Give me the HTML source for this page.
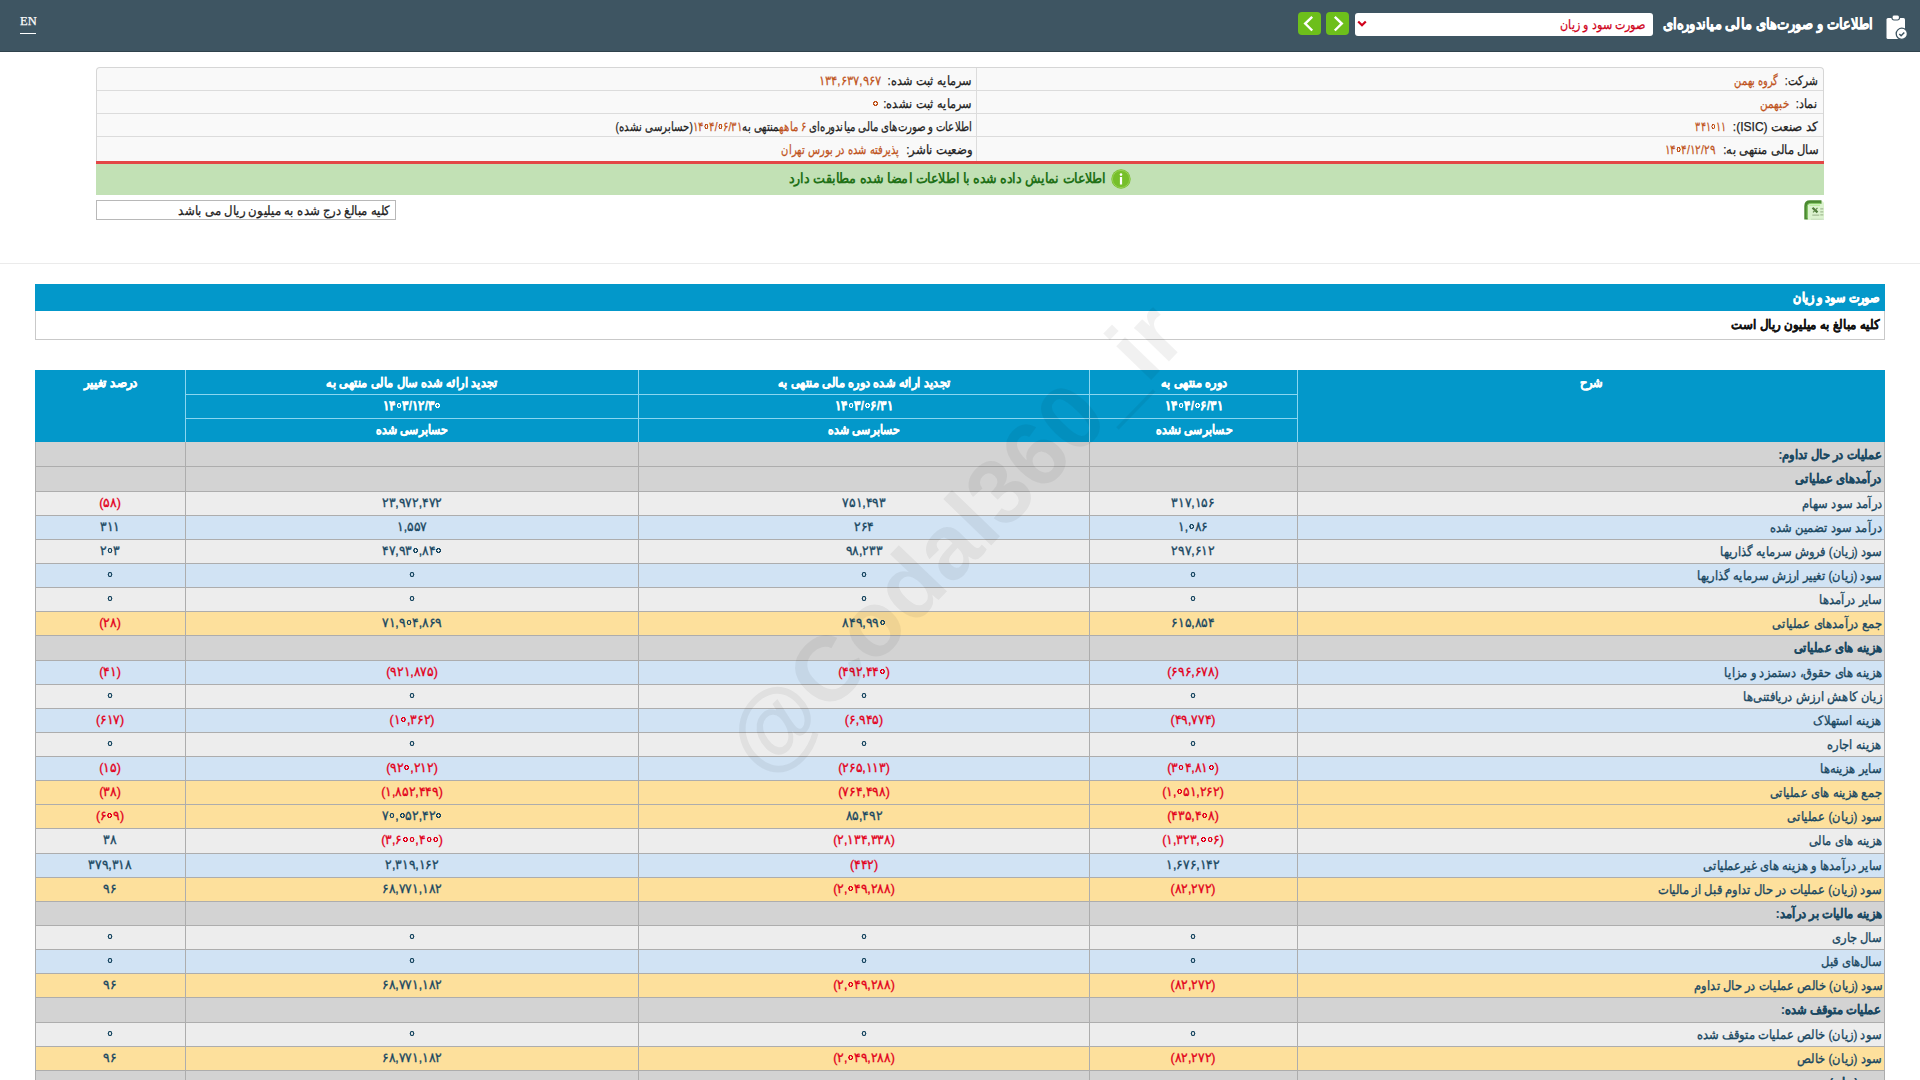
<!DOCTYPE html>
<html lang="fa" dir="rtl">
<head>
<meta charset="utf-8">
<title>صورت سود و زیان</title>
<style>
html,body{margin:0;padding:0;background:#fff;width:1920px;height:1080px;overflow:hidden;font-family:"Liberation Sans",sans-serif;position:relative;}
.t{position:absolute;white-space:nowrap;display:inline-block;-webkit-text-stroke:0.25px currentColor;}
.z{color:transparent;-webkit-text-stroke:0 !important;font-weight:normal;background:radial-gradient(circle at 50% 50%,transparent 0,transparent 1.05px,var(--c) 1.35px,var(--c) 2.35px,transparent 2.75px);}
</style>
</head>
<body>
<div style="position:absolute;left:0;top:0;width:1920px;height:52px;background:#3e5562;"></div>
<div style="position:absolute;left:0;top:51px;width:1920px;height:1px;background:#2f424c;"></div>
<span class="t" style="left:20px;top:11.5px;font-family:'Liberation Serif',serif;font-size:12.5px;color:#fff;line-height:18px;-webkit-text-stroke:0.25px #fff;">EN</span>
<div style="position:absolute;left:20px;top:33px;width:16px;height:1px;background:#fff;"></div>
<span class="t" id="ttl" style="top:15px;font-size:15px;color:#fff;line-height:18px;font-weight:bold;-webkit-text-stroke:0;right:47px;transform-origin:100% 50%;transform:scaleX(0.8654);-webkit-text-stroke:0.5px #fff;">اطلاعات و صورت‌های مالی میاندوره‌ای</span>
<svg style="position:absolute;left:1885px;top:14px" width="24" height="27" viewBox="0 0 24 27"><rect x="1.5" y="4" width="18.5" height="21" rx="1.5" fill="#fff"/><rect x="7" y="1" width="7.5" height="5" rx="2" fill="#fff" stroke="#3e5562" stroke-width="1.2"/><circle cx="16.8" cy="19.8" r="5.6" fill="#fff" stroke="#3e5562" stroke-width="1.3"/><path d="M14.3 20l1.8 1.8 3.2-3.3" fill="none" stroke="#3e5562" stroke-width="1.5"/></svg>
<div style="position:absolute;left:1355px;top:13px;width:298px;height:23px;background:#fff;border-radius:3px;"></div>
<span class="t" id="selt" style="top:17px;font-size:13px;color:#d0021b;line-height:16px;right:274px;transform-origin:100% 50%;transform:scaleX(0.8528);">صورت سود و زیان</span>
<svg style="position:absolute;left:1357px;top:20px" width="10" height="8" viewBox="0 0 10 8"><path d="M1.2 1.5l3.8 3.8 3.8-3.8" fill="none" stroke="#d0021b" stroke-width="2.2"/></svg>
<div style="position:absolute;left:1298px;top:12px;width:23px;height:23px;background:#6dbf1b;border-radius:4px;"><svg width="23" height="23" viewBox="0 0 23 23"><path d="M14.2 4.8L7.2 11.6l7 6.9" fill="none" stroke="#fff" stroke-width="2.4"/></svg></div>
<div style="position:absolute;left:1326px;top:12px;width:23px;height:23px;background:#6dbf1b;border-radius:4px;"><svg width="23" height="23" viewBox="0 0 23 23"><path d="M8.8 4.8l7 6.8-7 6.9" fill="none" stroke="#fff" stroke-width="2.4"/></svg></div>
<div style="position:absolute;left:96px;top:67px;width:1726px;height:94px;background:#f9f9f9;border:1px solid #d6d6d6;border-bottom:none;border-radius:4px 4px 0 0;"></div>
<div style="position:absolute;left:97px;top:90px;width:1726px;height:1px;background:#dcdcdc;"></div>
<div style="position:absolute;left:97px;top:113px;width:1726px;height:1px;background:#dcdcdc;"></div>
<div style="position:absolute;left:97px;top:136px;width:1726px;height:1px;background:#dcdcdc;"></div>
<div style="position:absolute;left:976px;top:68px;width:1px;height:93px;background:#dcdcdc;"></div>
<div style="position:absolute;left:96px;top:161px;width:1728px;height:3px;background:#e34646;"></div>
<div style="position:absolute;left:96px;top:164px;width:1728px;height:31px;background:#c2e1b5;"></div>
<span class="t" id="ir0" style="top:73px;font-size:13px;color:#222;line-height:16px;right:102px;transform-origin:100% 50%;transform:scaleX(0.8123);">شرکت:</span>
<span class="t" id="irv0" style="top:73px;font-size:13px;color:#c0541d;line-height:16px;right:142.5px;transform-origin:100% 50%;transform:scaleX(0.7566);">گروه بهمن</span>
<span class="t" id="ir1" style="top:96px;font-size:13px;color:#222;line-height:16px;right:102px;transform-origin:100% 50%;transform:scaleX(0.8585);">نماد:</span>
<span class="t" id="irv1" style="top:96px;font-size:13px;color:#c0541d;line-height:16px;right:131.29999999999995px;transform-origin:100% 50%;transform:scaleX(0.8056);">خبهمن</span>
<span class="t" id="ir2" style="top:119px;font-size:13px;color:#222;line-height:16px;right:102px;transform-origin:100% 50%;transform:scaleX(0.9258);">کد صنعت (ISIC):</span>
<span class="t" id="irv2" style="top:119px;font-size:13px;color:#c0541d;line-height:16px;right:194px;transform-origin:100% 50%;transform:scaleX(0.7262);">۳۴۱<b class="z" style="--c:#c0541d">۰</b>۱۱</span>
<span class="t" id="ir3" style="top:142px;font-size:13px;color:#222;line-height:16px;right:102px;transform-origin:100% 50%;transform:scaleX(0.8869);">سال مالی منتهی به:</span>
<span class="t" id="irv3" style="top:142px;font-size:13px;color:#c0541d;line-height:16px;right:204.4000000000001px;transform-origin:100% 50%;transform:scaleX(0.8018);">۱۴<b class="z" style="--c:#c0541d">۰</b>۴/۱۲/۲۹</span>
<span class="t" id="il0" style="top:73px;font-size:13px;color:#222;line-height:16px;right:948px;transform-origin:100% 50%;transform:scaleX(0.8705);">سرمایه ثبت شده:</span>
<span class="t" id="ilv0" style="top:73px;font-size:13px;color:#c0541d;line-height:16px;right:1038.5px;transform-origin:100% 50%;transform:scaleX(0.8913);">۱۳۴,۶۳۷,۹۶۷</span>
<span class="t" id="il1" style="top:96px;font-size:13px;color:#222;line-height:16px;right:948px;transform-origin:100% 50%;transform:scaleX(0.8700);">سرمایه ثبت نشده:</span>
<span class="t" id="ilv1" style="top:96px;font-size:13px;color:#c0541d;line-height:16px;right:1041.5px;transform-origin:100% 50%;transform:scaleX(1.0000);"><b class="z" style="--c:#c0541d">۰</b></span>
<span class="t" id="il3" style="top:142px;font-size:13px;color:#222;line-height:16px;right:948px;transform-origin:100% 50%;transform:scaleX(0.9012);">وضعیت ناشر:</span>
<span class="t" id="ilv3" style="top:142px;font-size:13px;color:#c0541d;line-height:16px;right:1020.2px;transform-origin:100% 50%;transform:scaleX(0.7640);">پذیرفته شده در بورس تهران</span>
<span class="t" id="il2" style="top:119px;font-size:13px;color:#222;line-height:16px;right:948px;transform-origin:100% 50%;transform:scaleX(0.7799);">اطلاعات و صورت‌های مالی میاندوره‌ای <span style="color:#c0541d">۶ ماهه</span>منتهی به<span style="color:#c0541d">۱۴<b class="z" style="--c:#c0541d">۰</b>۴/<b class="z" style="--c:#c0541d">۰</b>۶/۳۱</span>(حسابرسی نشده)</span>
<span class="t" id="grn" style="top:170px;font-size:14px;color:#217016;line-height:17px;font-weight:bold;-webkit-text-stroke:0;right:814px;transform-origin:100% 50%;transform:scaleX(0.9042);">اطلاعات نمایش داده شده با اطلاعات امضا شده مطابقت دارد</span>
<svg style="position:absolute;left:1111px;top:169px" width="20" height="20" viewBox="0 0 20 20"><circle cx="10" cy="10" r="9.7" fill="#76bf2a"/><circle cx="10" cy="10" r="8.6" fill="none" stroke="#9fd45e" stroke-width="0.8"/><rect x="8.9" y="8" width="2.2" height="7.5" fill="#fff"/><circle cx="10" cy="5.6" r="1.3" fill="#fff"/></svg>
<div style="position:absolute;left:96px;top:200px;width:298px;height:18px;border:1px solid #b8b8b8;background:#fff;"></div>
<span class="t" id="note" style="top:203px;font-size:13px;color:#222;line-height:16px;right:1530px;transform-origin:100% 50%;transform:scaleX(0.9008);">کلیه مبالغ درج شده به میلیون ریال می باشد</span>
<svg style="position:absolute;left:1804px;top:200px" width="21" height="21" viewBox="0 0 21 21"><rect x="1" y="1" width="19" height="19" rx="3" fill="#dcf3cf"/><path d="M2 19.5V6Q2 2 6 2H17.5" fill="none" stroke="#4a8a30" stroke-width="3.4"/><path d="M3.2 18V6.5Q3.2 3.4 6.4 3.4H16.5" fill="none" stroke="#8fd36e" stroke-width="0.9"/><path d="M5.5 5.2H16" stroke="#b5eb95" stroke-width="1.2"/><path d="M8.5 7.8l5 4.6" stroke="#4f7a3a" stroke-width="2.2"/><path d="M13.5 7.8l-4.5 4.6" stroke="#5f8a48" stroke-width="1.2"/><path d="M16.3 8.8h3M16.3 11.8h3M16.3 14.8h3M8.3 15.2h7" stroke="#a3bc95" stroke-width="1.3"/><path d="M7 19.2h13" stroke="#c6dcbc" stroke-width="1"/></svg>
<div style="position:absolute;left:0;top:263px;width:1920px;height:1px;background:#ebebeb;"></div>
<div style="position:absolute;left:35px;top:284px;width:1850px;height:27px;background:#0398ca;"></div>
<span class="t" id="bart" style="top:290px;font-size:13px;color:#fff;line-height:16px;font-weight:bold;-webkit-text-stroke:0;right:40px;transform-origin:100% 50%;transform:scaleX(0.8597);-webkit-text-stroke:0.75px #fff;">صورت سود و زیان</span>
<div style="position:absolute;left:35px;top:311px;width:1848px;height:28px;border:1px solid #c9c9c9;border-top:none;background:#fff;"></div>
<span class="t" id="subt" style="top:317px;font-size:13px;color:#111;line-height:16px;font-weight:bold;-webkit-text-stroke:0;right:41px;transform-origin:100% 50%;transform:scaleX(0.9076);-webkit-text-stroke:0.2px #111;">کلیه مبالغ به میلیون ریال است</span>
<div style="position:absolute;left:35px;top:370px;width:1850px;height:72px;background:#0398ca;"></div>
<div style="position:absolute;left:185px;top:370px;width:1px;height:72px;background:#8ad6f0;"></div>
<div style="position:absolute;left:638px;top:370px;width:1px;height:72px;background:#8ad6f0;"></div>
<div style="position:absolute;left:1089px;top:370px;width:1px;height:72px;background:#8ad6f0;"></div>
<div style="position:absolute;left:1297px;top:370px;width:1px;height:72px;background:#8ad6f0;"></div>
<div style="position:absolute;left:186px;top:394px;width:1111px;height:1px;background:#8ad6f0;"></div>
<div style="position:absolute;left:186px;top:418px;width:1111px;height:1px;background:#8ad6f0;"></div>
<span class="t" style="left:1591px;top:375px;font-size:13px;font-weight:bold;color:#fff;line-height:16px;-webkit-text-stroke:0.3px #fff;transform-origin:50% 50%;transform:translateX(-50%) scaleX(0.88);">شرح</span>
<span class="t" style="left:110.5px;top:375px;font-size:13px;font-weight:bold;color:#fff;line-height:16px;-webkit-text-stroke:0.3px #fff;transform-origin:50% 50%;transform:translateX(-50%) scaleX(0.92);">درصد تغییر</span>
<span class="t" style="left:1193.5px;top:375px;font-size:13px;font-weight:bold;color:#fff;line-height:16px;-webkit-text-stroke:0.3px #fff;transform-origin:50% 50%;transform:translateX(-50%) scaleX(0.88);">دوره منتهی به</span>
<span class="t" style="left:863.5px;top:375px;font-size:13px;font-weight:bold;color:#fff;line-height:16px;-webkit-text-stroke:0.3px #fff;transform-origin:50% 50%;transform:translateX(-50%) scaleX(0.88);">تجدید ارائه شده دوره مالی منتهی به</span>
<span class="t" style="left:411.5px;top:375px;font-size:13px;font-weight:bold;color:#fff;line-height:16px;-webkit-text-stroke:0.3px #fff;transform-origin:50% 50%;transform:translateX(-50%) scaleX(0.88);">تجدید ارائه شده سال مالی منتهی به</span>
<span class="t" style="left:1193.5px;top:398px;font-size:13px;font-weight:bold;color:#fff;line-height:16px;-webkit-text-stroke:0.3px #fff;transform-origin:50% 50%;transform:translateX(-50%) scaleX(0.915);">۱۴<b class="z" style="--c:#fff">۰</b>۴/<b class="z" style="--c:#fff">۰</b>۶/۳۱</span>
<span class="t" style="left:863.5px;top:398px;font-size:13px;font-weight:bold;color:#fff;line-height:16px;-webkit-text-stroke:0.3px #fff;transform-origin:50% 50%;transform:translateX(-50%) scaleX(0.915);">۱۴<b class="z" style="--c:#fff">۰</b>۳/<b class="z" style="--c:#fff">۰</b>۶/۳۱</span>
<span class="t" style="left:411.5px;top:398px;font-size:13px;font-weight:bold;color:#fff;line-height:16px;-webkit-text-stroke:0.3px #fff;transform-origin:50% 50%;transform:translateX(-50%) scaleX(0.915);">۱۴<b class="z" style="--c:#fff">۰</b>۳/۱۲/۳<b class="z" style="--c:#fff">۰</b></span>
<span class="t" style="left:1193.5px;top:422px;font-size:13px;font-weight:bold;color:#fff;line-height:16px;-webkit-text-stroke:0.3px #fff;transform-origin:50% 50%;transform:translateX(-50%) scaleX(0.845);">حسابرسی نشده</span>
<span class="t" style="left:863.5px;top:422px;font-size:13px;font-weight:bold;color:#fff;line-height:16px;-webkit-text-stroke:0.3px #fff;transform-origin:50% 50%;transform:translateX(-50%) scaleX(0.845);">حسابرسی شده</span>
<span class="t" style="left:411.5px;top:422px;font-size:13px;font-weight:bold;color:#fff;line-height:16px;-webkit-text-stroke:0.3px #fff;transform-origin:50% 50%;transform:translateX(-50%) scaleX(0.845);">حسابرسی شده</span>
<div style="position:absolute;left:35px;top:442px;width:1850px;height:24px;background:#d3d3d3;"></div>
<span class="t" style="right:38px;top:447px;font-size:13px;font-weight:bold;color:#1a4862;line-height:16px;transform-origin:100% 50%;transform:scaleX(0.885);-webkit-text-stroke:0.2px #1a4862;">عملیات در حال تداوم:</span>
<div style="position:absolute;left:35px;top:466px;width:1850px;height:25px;background:#d3d3d3;"></div>
<div style="position:absolute;left:35px;top:466px;width:1850px;height:1px;background:#adadad;"></div>
<span class="t" style="right:38px;top:471px;font-size:13px;font-weight:bold;color:#1a4862;line-height:16px;transform-origin:100% 50%;transform:scaleX(0.885);-webkit-text-stroke:0.2px #1a4862;">درآمدهای عملیاتی</span>
<div style="position:absolute;left:35px;top:491px;width:1850px;height:24px;background:#ededed;"></div>
<div style="position:absolute;left:35px;top:491px;width:1850px;height:1px;background:#adadad;"></div>
<span class="t" style="right:38px;top:496px;font-size:13px;color:#1a4862;line-height:16px;transform-origin:100% 50%;transform:scaleX(0.885);-webkit-text-stroke:0.35px #1a4862;">درآمد سود سهام</span>
<span class="t" style="left:1193.0px;top:495px;font-size:13px;color:#1a4862;line-height:16px;transform-origin:50% 50%;transform:translateX(-50%) scaleX(0.95);-webkit-text-stroke:0.35px #1a4862;">۳۱۷,۱۵۶</span>
<span class="t" style="left:863.5px;top:495px;font-size:13px;color:#1a4862;line-height:16px;transform-origin:50% 50%;transform:translateX(-50%) scaleX(0.95);-webkit-text-stroke:0.35px #1a4862;">۷۵۱,۴۹۳</span>
<span class="t" style="left:411.5px;top:495px;font-size:13px;color:#1a4862;line-height:16px;transform-origin:50% 50%;transform:translateX(-50%) scaleX(0.95);-webkit-text-stroke:0.35px #1a4862;">۲۳,۹۷۲,۴۷۲</span>
<span class="t" style="left:110.0px;top:495px;font-size:13px;color:#e3001b;line-height:16px;transform-origin:50% 50%;transform:translateX(-50%) scaleX(0.95);-webkit-text-stroke:0.35px #e3001b;">(۵۸)</span>
<div style="position:absolute;left:35px;top:515px;width:1850px;height:24px;background:#d1e3f4;"></div>
<div style="position:absolute;left:35px;top:515px;width:1850px;height:1px;background:#adadad;"></div>
<span class="t" style="right:38px;top:520px;font-size:13px;color:#1a4862;line-height:16px;transform-origin:100% 50%;transform:scaleX(0.885);-webkit-text-stroke:0.35px #1a4862;">درآمد سود تضمین شده</span>
<span class="t" style="left:1193.0px;top:519px;font-size:13px;color:#1a4862;line-height:16px;transform-origin:50% 50%;transform:translateX(-50%) scaleX(0.95);-webkit-text-stroke:0.35px #1a4862;">۱,<b class="z" style="--c:#1a4862">۰</b>۸۶</span>
<span class="t" style="left:863.5px;top:519px;font-size:13px;color:#1a4862;line-height:16px;transform-origin:50% 50%;transform:translateX(-50%) scaleX(0.95);-webkit-text-stroke:0.35px #1a4862;">۲۶۴</span>
<span class="t" style="left:411.5px;top:519px;font-size:13px;color:#1a4862;line-height:16px;transform-origin:50% 50%;transform:translateX(-50%) scaleX(0.95);-webkit-text-stroke:0.35px #1a4862;">۱,۵۵۷</span>
<span class="t" style="left:110.0px;top:519px;font-size:13px;color:#1a4862;line-height:16px;transform-origin:50% 50%;transform:translateX(-50%) scaleX(0.95);-webkit-text-stroke:0.35px #1a4862;">۳۱۱</span>
<div style="position:absolute;left:35px;top:539px;width:1850px;height:24px;background:#ededed;"></div>
<div style="position:absolute;left:35px;top:539px;width:1850px;height:1px;background:#adadad;"></div>
<span class="t" style="right:38px;top:544px;font-size:13px;color:#1a4862;line-height:16px;transform-origin:100% 50%;transform:scaleX(0.885);-webkit-text-stroke:0.35px #1a4862;">سود (زیان) فروش سرمایه گذاریها</span>
<span class="t" style="left:1193.0px;top:543px;font-size:13px;color:#1a4862;line-height:16px;transform-origin:50% 50%;transform:translateX(-50%) scaleX(0.95);-webkit-text-stroke:0.35px #1a4862;">۲۹۷,۶۱۲</span>
<span class="t" style="left:863.5px;top:543px;font-size:13px;color:#1a4862;line-height:16px;transform-origin:50% 50%;transform:translateX(-50%) scaleX(0.95);-webkit-text-stroke:0.35px #1a4862;">۹۸,۲۳۳</span>
<span class="t" style="left:411.5px;top:543px;font-size:13px;color:#1a4862;line-height:16px;transform-origin:50% 50%;transform:translateX(-50%) scaleX(0.95);-webkit-text-stroke:0.35px #1a4862;">۴۷,۹۳<b class="z" style="--c:#1a4862">۰</b>,۸۴<b class="z" style="--c:#1a4862">۰</b></span>
<span class="t" style="left:110.0px;top:543px;font-size:13px;color:#1a4862;line-height:16px;transform-origin:50% 50%;transform:translateX(-50%) scaleX(0.95);-webkit-text-stroke:0.35px #1a4862;">۲<b class="z" style="--c:#1a4862">۰</b>۳</span>
<div style="position:absolute;left:35px;top:563px;width:1850px;height:24px;background:#d1e3f4;"></div>
<div style="position:absolute;left:35px;top:563px;width:1850px;height:1px;background:#adadad;"></div>
<span class="t" style="right:38px;top:568px;font-size:13px;color:#1a4862;line-height:16px;transform-origin:100% 50%;transform:scaleX(0.885);-webkit-text-stroke:0.35px #1a4862;">سود (زیان) تغییر ارزش سرمایه گذاریها</span>
<span class="t" style="left:1193.0px;top:567px;font-size:13px;color:#1a4862;line-height:16px;transform-origin:50% 50%;transform:translateX(-50%) scaleX(0.95);-webkit-text-stroke:0.35px #1a4862;"><b class="z" style="--c:#1a4862">۰</b></span>
<span class="t" style="left:863.5px;top:567px;font-size:13px;color:#1a4862;line-height:16px;transform-origin:50% 50%;transform:translateX(-50%) scaleX(0.95);-webkit-text-stroke:0.35px #1a4862;"><b class="z" style="--c:#1a4862">۰</b></span>
<span class="t" style="left:411.5px;top:567px;font-size:13px;color:#1a4862;line-height:16px;transform-origin:50% 50%;transform:translateX(-50%) scaleX(0.95);-webkit-text-stroke:0.35px #1a4862;"><b class="z" style="--c:#1a4862">۰</b></span>
<span class="t" style="left:110.0px;top:567px;font-size:13px;color:#1a4862;line-height:16px;transform-origin:50% 50%;transform:translateX(-50%) scaleX(0.95);-webkit-text-stroke:0.35px #1a4862;"><b class="z" style="--c:#1a4862">۰</b></span>
<div style="position:absolute;left:35px;top:587px;width:1850px;height:24px;background:#ededed;"></div>
<div style="position:absolute;left:35px;top:587px;width:1850px;height:1px;background:#adadad;"></div>
<span class="t" style="right:38px;top:592px;font-size:13px;color:#1a4862;line-height:16px;transform-origin:100% 50%;transform:scaleX(0.885);-webkit-text-stroke:0.35px #1a4862;">سایر درآمدها</span>
<span class="t" style="left:1193.0px;top:591px;font-size:13px;color:#1a4862;line-height:16px;transform-origin:50% 50%;transform:translateX(-50%) scaleX(0.95);-webkit-text-stroke:0.35px #1a4862;"><b class="z" style="--c:#1a4862">۰</b></span>
<span class="t" style="left:863.5px;top:591px;font-size:13px;color:#1a4862;line-height:16px;transform-origin:50% 50%;transform:translateX(-50%) scaleX(0.95);-webkit-text-stroke:0.35px #1a4862;"><b class="z" style="--c:#1a4862">۰</b></span>
<span class="t" style="left:411.5px;top:591px;font-size:13px;color:#1a4862;line-height:16px;transform-origin:50% 50%;transform:translateX(-50%) scaleX(0.95);-webkit-text-stroke:0.35px #1a4862;"><b class="z" style="--c:#1a4862">۰</b></span>
<span class="t" style="left:110.0px;top:591px;font-size:13px;color:#1a4862;line-height:16px;transform-origin:50% 50%;transform:translateX(-50%) scaleX(0.95);-webkit-text-stroke:0.35px #1a4862;"><b class="z" style="--c:#1a4862">۰</b></span>
<div style="position:absolute;left:35px;top:611px;width:1850px;height:24px;background:#fde09c;"></div>
<div style="position:absolute;left:35px;top:611px;width:1850px;height:1px;background:#adadad;"></div>
<span class="t" style="right:38px;top:616px;font-size:13px;color:#1a4862;line-height:16px;transform-origin:100% 50%;transform:scaleX(0.885);-webkit-text-stroke:0.35px #1a4862;">جمع درآمدهای عملیاتی</span>
<span class="t" style="left:1193.0px;top:615px;font-size:13px;color:#1a4862;line-height:16px;transform-origin:50% 50%;transform:translateX(-50%) scaleX(0.95);-webkit-text-stroke:0.35px #1a4862;">۶۱۵,۸۵۴</span>
<span class="t" style="left:863.5px;top:615px;font-size:13px;color:#1a4862;line-height:16px;transform-origin:50% 50%;transform:translateX(-50%) scaleX(0.95);-webkit-text-stroke:0.35px #1a4862;">۸۴۹,۹۹<b class="z" style="--c:#1a4862">۰</b></span>
<span class="t" style="left:411.5px;top:615px;font-size:13px;color:#1a4862;line-height:16px;transform-origin:50% 50%;transform:translateX(-50%) scaleX(0.95);-webkit-text-stroke:0.35px #1a4862;">۷۱,۹<b class="z" style="--c:#1a4862">۰</b>۴,۸۶۹</span>
<span class="t" style="left:110.0px;top:615px;font-size:13px;color:#e3001b;line-height:16px;transform-origin:50% 50%;transform:translateX(-50%) scaleX(0.95);-webkit-text-stroke:0.35px #e3001b;">(۲۸)</span>
<div style="position:absolute;left:35px;top:635px;width:1850px;height:25px;background:#d3d3d3;"></div>
<div style="position:absolute;left:35px;top:635px;width:1850px;height:1px;background:#adadad;"></div>
<span class="t" style="right:38px;top:640px;font-size:13px;font-weight:bold;color:#1a4862;line-height:16px;transform-origin:100% 50%;transform:scaleX(0.885);-webkit-text-stroke:0.2px #1a4862;">هزینه های عملیاتی</span>
<div style="position:absolute;left:35px;top:660px;width:1850px;height:24px;background:#d1e3f4;"></div>
<div style="position:absolute;left:35px;top:660px;width:1850px;height:1px;background:#adadad;"></div>
<span class="t" style="right:38px;top:665px;font-size:13px;color:#1a4862;line-height:16px;transform-origin:100% 50%;transform:scaleX(0.885);-webkit-text-stroke:0.35px #1a4862;">هزینه های حقوق، دستمزد و مزایا</span>
<span class="t" style="left:1193.0px;top:664px;font-size:13px;color:#e3001b;line-height:16px;transform-origin:50% 50%;transform:translateX(-50%) scaleX(0.95);-webkit-text-stroke:0.35px #e3001b;">(۶۹۶,۶۷۸)</span>
<span class="t" style="left:863.5px;top:664px;font-size:13px;color:#e3001b;line-height:16px;transform-origin:50% 50%;transform:translateX(-50%) scaleX(0.95);-webkit-text-stroke:0.35px #e3001b;">(۴۹۲,۴۴<b class="z" style="--c:#e3001b">۰</b>)</span>
<span class="t" style="left:411.5px;top:664px;font-size:13px;color:#e3001b;line-height:16px;transform-origin:50% 50%;transform:translateX(-50%) scaleX(0.95);-webkit-text-stroke:0.35px #e3001b;">(۹۲۱,۸۷۵)</span>
<span class="t" style="left:110.0px;top:664px;font-size:13px;color:#e3001b;line-height:16px;transform-origin:50% 50%;transform:translateX(-50%) scaleX(0.95);-webkit-text-stroke:0.35px #e3001b;">(۴۱)</span>
<div style="position:absolute;left:35px;top:684px;width:1850px;height:24px;background:#ededed;"></div>
<div style="position:absolute;left:35px;top:684px;width:1850px;height:1px;background:#adadad;"></div>
<span class="t" style="right:38px;top:689px;font-size:13px;color:#1a4862;line-height:16px;transform-origin:100% 50%;transform:scaleX(0.885);-webkit-text-stroke:0.35px #1a4862;">زیان کاهش ارزش دریافتنی‌ها</span>
<span class="t" style="left:1193.0px;top:688px;font-size:13px;color:#1a4862;line-height:16px;transform-origin:50% 50%;transform:translateX(-50%) scaleX(0.95);-webkit-text-stroke:0.35px #1a4862;"><b class="z" style="--c:#1a4862">۰</b></span>
<span class="t" style="left:863.5px;top:688px;font-size:13px;color:#1a4862;line-height:16px;transform-origin:50% 50%;transform:translateX(-50%) scaleX(0.95);-webkit-text-stroke:0.35px #1a4862;"><b class="z" style="--c:#1a4862">۰</b></span>
<span class="t" style="left:411.5px;top:688px;font-size:13px;color:#1a4862;line-height:16px;transform-origin:50% 50%;transform:translateX(-50%) scaleX(0.95);-webkit-text-stroke:0.35px #1a4862;"><b class="z" style="--c:#1a4862">۰</b></span>
<span class="t" style="left:110.0px;top:688px;font-size:13px;color:#1a4862;line-height:16px;transform-origin:50% 50%;transform:translateX(-50%) scaleX(0.95);-webkit-text-stroke:0.35px #1a4862;"><b class="z" style="--c:#1a4862">۰</b></span>
<div style="position:absolute;left:35px;top:708px;width:1850px;height:24px;background:#d1e3f4;"></div>
<div style="position:absolute;left:35px;top:708px;width:1850px;height:1px;background:#adadad;"></div>
<span class="t" style="right:38px;top:713px;font-size:13px;color:#1a4862;line-height:16px;transform-origin:100% 50%;transform:scaleX(0.885);-webkit-text-stroke:0.35px #1a4862;">هزینه استهلاک</span>
<span class="t" style="left:1193.0px;top:712px;font-size:13px;color:#e3001b;line-height:16px;transform-origin:50% 50%;transform:translateX(-50%) scaleX(0.95);-webkit-text-stroke:0.35px #e3001b;">(۴۹,۷۷۴)</span>
<span class="t" style="left:863.5px;top:712px;font-size:13px;color:#e3001b;line-height:16px;transform-origin:50% 50%;transform:translateX(-50%) scaleX(0.95);-webkit-text-stroke:0.35px #e3001b;">(۶,۹۴۵)</span>
<span class="t" style="left:411.5px;top:712px;font-size:13px;color:#e3001b;line-height:16px;transform-origin:50% 50%;transform:translateX(-50%) scaleX(0.95);-webkit-text-stroke:0.35px #e3001b;">(۱<b class="z" style="--c:#e3001b">۰</b>,۳۶۲)</span>
<span class="t" style="left:110.0px;top:712px;font-size:13px;color:#e3001b;line-height:16px;transform-origin:50% 50%;transform:translateX(-50%) scaleX(0.95);-webkit-text-stroke:0.35px #e3001b;">(۶۱۷)</span>
<div style="position:absolute;left:35px;top:732px;width:1850px;height:24px;background:#ededed;"></div>
<div style="position:absolute;left:35px;top:732px;width:1850px;height:1px;background:#adadad;"></div>
<span class="t" style="right:38px;top:737px;font-size:13px;color:#1a4862;line-height:16px;transform-origin:100% 50%;transform:scaleX(0.885);-webkit-text-stroke:0.35px #1a4862;">هزینه اجاره</span>
<span class="t" style="left:1193.0px;top:736px;font-size:13px;color:#1a4862;line-height:16px;transform-origin:50% 50%;transform:translateX(-50%) scaleX(0.95);-webkit-text-stroke:0.35px #1a4862;"><b class="z" style="--c:#1a4862">۰</b></span>
<span class="t" style="left:863.5px;top:736px;font-size:13px;color:#1a4862;line-height:16px;transform-origin:50% 50%;transform:translateX(-50%) scaleX(0.95);-webkit-text-stroke:0.35px #1a4862;"><b class="z" style="--c:#1a4862">۰</b></span>
<span class="t" style="left:411.5px;top:736px;font-size:13px;color:#1a4862;line-height:16px;transform-origin:50% 50%;transform:translateX(-50%) scaleX(0.95);-webkit-text-stroke:0.35px #1a4862;"><b class="z" style="--c:#1a4862">۰</b></span>
<span class="t" style="left:110.0px;top:736px;font-size:13px;color:#1a4862;line-height:16px;transform-origin:50% 50%;transform:translateX(-50%) scaleX(0.95);-webkit-text-stroke:0.35px #1a4862;"><b class="z" style="--c:#1a4862">۰</b></span>
<div style="position:absolute;left:35px;top:756px;width:1850px;height:24px;background:#d1e3f4;"></div>
<div style="position:absolute;left:35px;top:756px;width:1850px;height:1px;background:#adadad;"></div>
<span class="t" style="right:38px;top:761px;font-size:13px;color:#1a4862;line-height:16px;transform-origin:100% 50%;transform:scaleX(0.885);-webkit-text-stroke:0.35px #1a4862;">سایر هزینه‌ها</span>
<span class="t" style="left:1193.0px;top:760px;font-size:13px;color:#e3001b;line-height:16px;transform-origin:50% 50%;transform:translateX(-50%) scaleX(0.95);-webkit-text-stroke:0.35px #e3001b;">(۳<b class="z" style="--c:#e3001b">۰</b>۴,۸۱<b class="z" style="--c:#e3001b">۰</b>)</span>
<span class="t" style="left:863.5px;top:760px;font-size:13px;color:#e3001b;line-height:16px;transform-origin:50% 50%;transform:translateX(-50%) scaleX(0.95);-webkit-text-stroke:0.35px #e3001b;">(۲۶۵,۱۱۳)</span>
<span class="t" style="left:411.5px;top:760px;font-size:13px;color:#e3001b;line-height:16px;transform-origin:50% 50%;transform:translateX(-50%) scaleX(0.95);-webkit-text-stroke:0.35px #e3001b;">(۹۲<b class="z" style="--c:#e3001b">۰</b>,۲۱۲)</span>
<span class="t" style="left:110.0px;top:760px;font-size:13px;color:#e3001b;line-height:16px;transform-origin:50% 50%;transform:translateX(-50%) scaleX(0.95);-webkit-text-stroke:0.35px #e3001b;">(۱۵)</span>
<div style="position:absolute;left:35px;top:780px;width:1850px;height:24px;background:#fde09c;"></div>
<div style="position:absolute;left:35px;top:780px;width:1850px;height:1px;background:#adadad;"></div>
<span class="t" style="right:38px;top:785px;font-size:13px;color:#1a4862;line-height:16px;transform-origin:100% 50%;transform:scaleX(0.885);-webkit-text-stroke:0.35px #1a4862;">جمع هزینه های عملیاتی</span>
<span class="t" style="left:1193.0px;top:784px;font-size:13px;color:#e3001b;line-height:16px;transform-origin:50% 50%;transform:translateX(-50%) scaleX(0.95);-webkit-text-stroke:0.35px #e3001b;">(۱,<b class="z" style="--c:#e3001b">۰</b>۵۱,۲۶۲)</span>
<span class="t" style="left:863.5px;top:784px;font-size:13px;color:#e3001b;line-height:16px;transform-origin:50% 50%;transform:translateX(-50%) scaleX(0.95);-webkit-text-stroke:0.35px #e3001b;">(۷۶۴,۴۹۸)</span>
<span class="t" style="left:411.5px;top:784px;font-size:13px;color:#e3001b;line-height:16px;transform-origin:50% 50%;transform:translateX(-50%) scaleX(0.95);-webkit-text-stroke:0.35px #e3001b;">(۱,۸۵۲,۴۴۹)</span>
<span class="t" style="left:110.0px;top:784px;font-size:13px;color:#e3001b;line-height:16px;transform-origin:50% 50%;transform:translateX(-50%) scaleX(0.95);-webkit-text-stroke:0.35px #e3001b;">(۳۸)</span>
<div style="position:absolute;left:35px;top:804px;width:1850px;height:24px;background:#fde09c;"></div>
<div style="position:absolute;left:35px;top:804px;width:1850px;height:1px;background:#adadad;"></div>
<span class="t" style="right:38px;top:809px;font-size:13px;color:#1a4862;line-height:16px;transform-origin:100% 50%;transform:scaleX(0.885);-webkit-text-stroke:0.35px #1a4862;">سود (زیان) عملیاتی</span>
<span class="t" style="left:1193.0px;top:808px;font-size:13px;color:#e3001b;line-height:16px;transform-origin:50% 50%;transform:translateX(-50%) scaleX(0.95);-webkit-text-stroke:0.35px #e3001b;">(۴۳۵,۴<b class="z" style="--c:#e3001b">۰</b>۸)</span>
<span class="t" style="left:863.5px;top:808px;font-size:13px;color:#1a4862;line-height:16px;transform-origin:50% 50%;transform:translateX(-50%) scaleX(0.95);-webkit-text-stroke:0.35px #1a4862;">۸۵,۴۹۲</span>
<span class="t" style="left:411.5px;top:808px;font-size:13px;color:#1a4862;line-height:16px;transform-origin:50% 50%;transform:translateX(-50%) scaleX(0.95);-webkit-text-stroke:0.35px #1a4862;">۷<b class="z" style="--c:#1a4862">۰</b>,<b class="z" style="--c:#1a4862">۰</b>۵۲,۴۲<b class="z" style="--c:#1a4862">۰</b></span>
<span class="t" style="left:110.0px;top:808px;font-size:13px;color:#e3001b;line-height:16px;transform-origin:50% 50%;transform:translateX(-50%) scaleX(0.95);-webkit-text-stroke:0.35px #e3001b;">(۶<b class="z" style="--c:#e3001b">۰</b>۹)</span>
<div style="position:absolute;left:35px;top:828px;width:1850px;height:25px;background:#ededed;"></div>
<div style="position:absolute;left:35px;top:828px;width:1850px;height:1px;background:#adadad;"></div>
<span class="t" style="right:38px;top:833px;font-size:13px;color:#1a4862;line-height:16px;transform-origin:100% 50%;transform:scaleX(0.885);-webkit-text-stroke:0.35px #1a4862;">هزینه های مالی</span>
<span class="t" style="left:1193.0px;top:832px;font-size:13px;color:#e3001b;line-height:16px;transform-origin:50% 50%;transform:translateX(-50%) scaleX(0.95);-webkit-text-stroke:0.35px #e3001b;">(۱,۳۲۳,<b class="z" style="--c:#e3001b">۰</b><b class="z" style="--c:#e3001b">۰</b>۶)</span>
<span class="t" style="left:863.5px;top:832px;font-size:13px;color:#e3001b;line-height:16px;transform-origin:50% 50%;transform:translateX(-50%) scaleX(0.95);-webkit-text-stroke:0.35px #e3001b;">(۲,۱۳۴,۳۳۸)</span>
<span class="t" style="left:411.5px;top:832px;font-size:13px;color:#e3001b;line-height:16px;transform-origin:50% 50%;transform:translateX(-50%) scaleX(0.95);-webkit-text-stroke:0.35px #e3001b;">(۳,۶<b class="z" style="--c:#e3001b">۰</b><b class="z" style="--c:#e3001b">۰</b>,۴<b class="z" style="--c:#e3001b">۰</b><b class="z" style="--c:#e3001b">۰</b>)</span>
<span class="t" style="left:110.0px;top:832px;font-size:13px;color:#1a4862;line-height:16px;transform-origin:50% 50%;transform:translateX(-50%) scaleX(0.95);-webkit-text-stroke:0.35px #1a4862;">۳۸</span>
<div style="position:absolute;left:35px;top:853px;width:1850px;height:24px;background:#d1e3f4;"></div>
<div style="position:absolute;left:35px;top:853px;width:1850px;height:1px;background:#adadad;"></div>
<span class="t" style="right:38px;top:858px;font-size:13px;color:#1a4862;line-height:16px;transform-origin:100% 50%;transform:scaleX(0.885);-webkit-text-stroke:0.35px #1a4862;">سایر درآمدها و هزینه های غیرعملیاتی</span>
<span class="t" style="left:1193.0px;top:857px;font-size:13px;color:#1a4862;line-height:16px;transform-origin:50% 50%;transform:translateX(-50%) scaleX(0.95);-webkit-text-stroke:0.35px #1a4862;">۱,۶۷۶,۱۴۲</span>
<span class="t" style="left:863.5px;top:857px;font-size:13px;color:#e3001b;line-height:16px;transform-origin:50% 50%;transform:translateX(-50%) scaleX(0.95);-webkit-text-stroke:0.35px #e3001b;">(۴۴۲)</span>
<span class="t" style="left:411.5px;top:857px;font-size:13px;color:#1a4862;line-height:16px;transform-origin:50% 50%;transform:translateX(-50%) scaleX(0.95);-webkit-text-stroke:0.35px #1a4862;">۲,۳۱۹,۱۶۲</span>
<span class="t" style="left:110.0px;top:857px;font-size:13px;color:#1a4862;line-height:16px;transform-origin:50% 50%;transform:translateX(-50%) scaleX(0.95);-webkit-text-stroke:0.35px #1a4862;">۳۷۹,۳۱۸</span>
<div style="position:absolute;left:35px;top:877px;width:1850px;height:24px;background:#fde09c;"></div>
<div style="position:absolute;left:35px;top:877px;width:1850px;height:1px;background:#adadad;"></div>
<span class="t" style="right:38px;top:882px;font-size:13px;color:#1a4862;line-height:16px;transform-origin:100% 50%;transform:scaleX(0.885);-webkit-text-stroke:0.35px #1a4862;">سود (زیان) عملیات در حال تداوم قبل از مالیات</span>
<span class="t" style="left:1193.0px;top:881px;font-size:13px;color:#e3001b;line-height:16px;transform-origin:50% 50%;transform:translateX(-50%) scaleX(0.95);-webkit-text-stroke:0.35px #e3001b;">(۸۲,۲۷۲)</span>
<span class="t" style="left:863.5px;top:881px;font-size:13px;color:#e3001b;line-height:16px;transform-origin:50% 50%;transform:translateX(-50%) scaleX(0.95);-webkit-text-stroke:0.35px #e3001b;">(۲,<b class="z" style="--c:#e3001b">۰</b>۴۹,۲۸۸)</span>
<span class="t" style="left:411.5px;top:881px;font-size:13px;color:#1a4862;line-height:16px;transform-origin:50% 50%;transform:translateX(-50%) scaleX(0.95);-webkit-text-stroke:0.35px #1a4862;">۶۸,۷۷۱,۱۸۲</span>
<span class="t" style="left:110.0px;top:881px;font-size:13px;color:#1a4862;line-height:16px;transform-origin:50% 50%;transform:translateX(-50%) scaleX(0.95);-webkit-text-stroke:0.35px #1a4862;">۹۶</span>
<div style="position:absolute;left:35px;top:901px;width:1850px;height:24px;background:#d3d3d3;"></div>
<div style="position:absolute;left:35px;top:901px;width:1850px;height:1px;background:#adadad;"></div>
<span class="t" style="right:38px;top:906px;font-size:13px;font-weight:bold;color:#1a4862;line-height:16px;transform-origin:100% 50%;transform:scaleX(0.885);-webkit-text-stroke:0.2px #1a4862;">هزینه مالیات بر درآمد:</span>
<div style="position:absolute;left:35px;top:925px;width:1850px;height:24px;background:#ededed;"></div>
<div style="position:absolute;left:35px;top:925px;width:1850px;height:1px;background:#adadad;"></div>
<span class="t" style="right:38px;top:930px;font-size:13px;color:#1a4862;line-height:16px;transform-origin:100% 50%;transform:scaleX(0.885);-webkit-text-stroke:0.35px #1a4862;">سال جاری</span>
<span class="t" style="left:1193.0px;top:929px;font-size:13px;color:#1a4862;line-height:16px;transform-origin:50% 50%;transform:translateX(-50%) scaleX(0.95);-webkit-text-stroke:0.35px #1a4862;"><b class="z" style="--c:#1a4862">۰</b></span>
<span class="t" style="left:863.5px;top:929px;font-size:13px;color:#1a4862;line-height:16px;transform-origin:50% 50%;transform:translateX(-50%) scaleX(0.95);-webkit-text-stroke:0.35px #1a4862;"><b class="z" style="--c:#1a4862">۰</b></span>
<span class="t" style="left:411.5px;top:929px;font-size:13px;color:#1a4862;line-height:16px;transform-origin:50% 50%;transform:translateX(-50%) scaleX(0.95);-webkit-text-stroke:0.35px #1a4862;"><b class="z" style="--c:#1a4862">۰</b></span>
<span class="t" style="left:110.0px;top:929px;font-size:13px;color:#1a4862;line-height:16px;transform-origin:50% 50%;transform:translateX(-50%) scaleX(0.95);-webkit-text-stroke:0.35px #1a4862;"><b class="z" style="--c:#1a4862">۰</b></span>
<div style="position:absolute;left:35px;top:949px;width:1850px;height:24px;background:#d1e3f4;"></div>
<div style="position:absolute;left:35px;top:949px;width:1850px;height:1px;background:#adadad;"></div>
<span class="t" style="right:38px;top:954px;font-size:13px;color:#1a4862;line-height:16px;transform-origin:100% 50%;transform:scaleX(0.885);-webkit-text-stroke:0.35px #1a4862;">سال‌های قبل</span>
<span class="t" style="left:1193.0px;top:953px;font-size:13px;color:#1a4862;line-height:16px;transform-origin:50% 50%;transform:translateX(-50%) scaleX(0.95);-webkit-text-stroke:0.35px #1a4862;"><b class="z" style="--c:#1a4862">۰</b></span>
<span class="t" style="left:863.5px;top:953px;font-size:13px;color:#1a4862;line-height:16px;transform-origin:50% 50%;transform:translateX(-50%) scaleX(0.95);-webkit-text-stroke:0.35px #1a4862;"><b class="z" style="--c:#1a4862">۰</b></span>
<span class="t" style="left:411.5px;top:953px;font-size:13px;color:#1a4862;line-height:16px;transform-origin:50% 50%;transform:translateX(-50%) scaleX(0.95);-webkit-text-stroke:0.35px #1a4862;"><b class="z" style="--c:#1a4862">۰</b></span>
<span class="t" style="left:110.0px;top:953px;font-size:13px;color:#1a4862;line-height:16px;transform-origin:50% 50%;transform:translateX(-50%) scaleX(0.95);-webkit-text-stroke:0.35px #1a4862;"><b class="z" style="--c:#1a4862">۰</b></span>
<div style="position:absolute;left:35px;top:973px;width:1850px;height:24px;background:#fde09c;"></div>
<div style="position:absolute;left:35px;top:973px;width:1850px;height:1px;background:#adadad;"></div>
<span class="t" style="right:38px;top:978px;font-size:13px;color:#1a4862;line-height:16px;transform-origin:100% 50%;transform:scaleX(0.885);-webkit-text-stroke:0.35px #1a4862;">سود (زیان) خالص عملیات در حال تداوم</span>
<span class="t" style="left:1193.0px;top:977px;font-size:13px;color:#e3001b;line-height:16px;transform-origin:50% 50%;transform:translateX(-50%) scaleX(0.95);-webkit-text-stroke:0.35px #e3001b;">(۸۲,۲۷۲)</span>
<span class="t" style="left:863.5px;top:977px;font-size:13px;color:#e3001b;line-height:16px;transform-origin:50% 50%;transform:translateX(-50%) scaleX(0.95);-webkit-text-stroke:0.35px #e3001b;">(۲,<b class="z" style="--c:#e3001b">۰</b>۴۹,۲۸۸)</span>
<span class="t" style="left:411.5px;top:977px;font-size:13px;color:#1a4862;line-height:16px;transform-origin:50% 50%;transform:translateX(-50%) scaleX(0.95);-webkit-text-stroke:0.35px #1a4862;">۶۸,۷۷۱,۱۸۲</span>
<span class="t" style="left:110.0px;top:977px;font-size:13px;color:#1a4862;line-height:16px;transform-origin:50% 50%;transform:translateX(-50%) scaleX(0.95);-webkit-text-stroke:0.35px #1a4862;">۹۶</span>
<div style="position:absolute;left:35px;top:997px;width:1850px;height:25px;background:#d3d3d3;"></div>
<div style="position:absolute;left:35px;top:997px;width:1850px;height:1px;background:#adadad;"></div>
<span class="t" style="right:38px;top:1002px;font-size:13px;font-weight:bold;color:#1a4862;line-height:16px;transform-origin:100% 50%;transform:scaleX(0.885);-webkit-text-stroke:0.2px #1a4862;">عملیات متوقف شده:</span>
<div style="position:absolute;left:35px;top:1022px;width:1850px;height:24px;background:#ededed;"></div>
<div style="position:absolute;left:35px;top:1022px;width:1850px;height:1px;background:#adadad;"></div>
<span class="t" style="right:38px;top:1027px;font-size:13px;color:#1a4862;line-height:16px;transform-origin:100% 50%;transform:scaleX(0.885);-webkit-text-stroke:0.35px #1a4862;">سود (زیان) خالص عملیات متوقف شده</span>
<span class="t" style="left:1193.0px;top:1026px;font-size:13px;color:#1a4862;line-height:16px;transform-origin:50% 50%;transform:translateX(-50%) scaleX(0.95);-webkit-text-stroke:0.35px #1a4862;"><b class="z" style="--c:#1a4862">۰</b></span>
<span class="t" style="left:863.5px;top:1026px;font-size:13px;color:#1a4862;line-height:16px;transform-origin:50% 50%;transform:translateX(-50%) scaleX(0.95);-webkit-text-stroke:0.35px #1a4862;"><b class="z" style="--c:#1a4862">۰</b></span>
<span class="t" style="left:411.5px;top:1026px;font-size:13px;color:#1a4862;line-height:16px;transform-origin:50% 50%;transform:translateX(-50%) scaleX(0.95);-webkit-text-stroke:0.35px #1a4862;"><b class="z" style="--c:#1a4862">۰</b></span>
<span class="t" style="left:110.0px;top:1026px;font-size:13px;color:#1a4862;line-height:16px;transform-origin:50% 50%;transform:translateX(-50%) scaleX(0.95);-webkit-text-stroke:0.35px #1a4862;"><b class="z" style="--c:#1a4862">۰</b></span>
<div style="position:absolute;left:35px;top:1046px;width:1850px;height:24px;background:#fde09c;"></div>
<div style="position:absolute;left:35px;top:1046px;width:1850px;height:1px;background:#adadad;"></div>
<span class="t" style="right:38px;top:1051px;font-size:13px;color:#1a4862;line-height:16px;transform-origin:100% 50%;transform:scaleX(0.885);-webkit-text-stroke:0.35px #1a4862;">سود (زیان) خالص</span>
<span class="t" style="left:1193.0px;top:1050px;font-size:13px;color:#e3001b;line-height:16px;transform-origin:50% 50%;transform:translateX(-50%) scaleX(0.95);-webkit-text-stroke:0.35px #e3001b;">(۸۲,۲۷۲)</span>
<span class="t" style="left:863.5px;top:1050px;font-size:13px;color:#e3001b;line-height:16px;transform-origin:50% 50%;transform:translateX(-50%) scaleX(0.95);-webkit-text-stroke:0.35px #e3001b;">(۲,<b class="z" style="--c:#e3001b">۰</b>۴۹,۲۸۸)</span>
<span class="t" style="left:411.5px;top:1050px;font-size:13px;color:#1a4862;line-height:16px;transform-origin:50% 50%;transform:translateX(-50%) scaleX(0.95);-webkit-text-stroke:0.35px #1a4862;">۶۸,۷۷۱,۱۸۲</span>
<span class="t" style="left:110.0px;top:1050px;font-size:13px;color:#1a4862;line-height:16px;transform-origin:50% 50%;transform:translateX(-50%) scaleX(0.95);-webkit-text-stroke:0.35px #1a4862;">۹۶</span>
<div style="position:absolute;left:35px;top:1070px;width:1850px;height:24px;background:#d3d3d3;"></div>
<div style="position:absolute;left:35px;top:1070px;width:1850px;height:1px;background:#adadad;"></div>
<span class="t" style="right:38px;top:1075px;font-size:13px;font-weight:bold;color:#1a4862;line-height:16px;transform-origin:100% 50%;transform:scaleX(0.885);-webkit-text-stroke:0.2px #1a4862;">سود (زیان) هر سهم</span>
<div style="position:absolute;left:35px;top:442px;width:1px;height:638px;background:#adadad;"></div>
<div style="position:absolute;left:185px;top:442px;width:1px;height:638px;background:#adadad;"></div>
<div style="position:absolute;left:638px;top:442px;width:1px;height:638px;background:#adadad;"></div>
<div style="position:absolute;left:1089px;top:442px;width:1px;height:638px;background:#adadad;"></div>
<div style="position:absolute;left:1297px;top:442px;width:1px;height:638px;background:#adadad;"></div>
<div style="position:absolute;left:1884px;top:442px;width:1px;height:638px;background:#adadad;"></div>
<div id="wm" style="position:absolute;left:954px;top:538px;width:0;height:0;"><span style="position:absolute;left:0;top:0;transform:translate(-50%,-50%) rotate(-46deg);font-size:92px;font-weight:bold;color:rgba(0,0,0,0.055);white-space:nowrap;line-height:1;direction:ltr;">@Codal360_ir</span></div>
</body>
</html>
